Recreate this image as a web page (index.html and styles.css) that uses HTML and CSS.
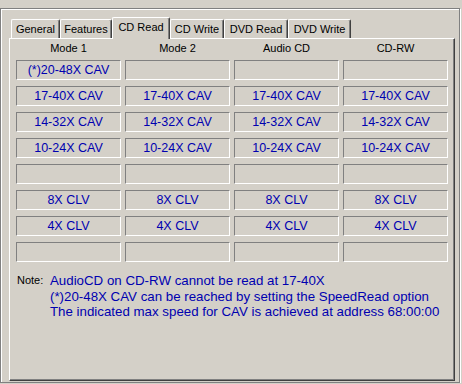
FILE: index.html
```html
<!DOCTYPE html>
<html lang="en">
<head>
    <meta charset="UTF-8">
    <title>CD Read</title>
    <link rel="stylesheet" href="styles.css">
</head>
<body>
    <div class="frame">
        <div class="tabs">
            <div class="tab tab-general">General</div>
            <div class="tab tab-features">Features</div>
            <div class="tab tab-cdread selected">CD Read</div>
            <div class="tab tab-cdwrite">CD Write</div>
            <div class="tab tab-dvdread">DVD Read</div>
            <div class="tab tab-dvdwrite">DVD Write</div>
        </div>
        <div class="panel">
            <div class="heads">
                <div>Mode 1</div>
                <div>Mode 2</div>
                <div>Audio CD</div>
                <div>CD-RW</div>
            </div>
            <div class="cells">
                <!-- row 1 -->
                <div class="cell">(*)20-48X CAV</div>
                <div class="cell"></div>
                <div class="cell"></div>
                <div class="cell"></div>
                <!-- row 2 -->
                <div class="cell">17-40X CAV</div>
                <div class="cell">17-40X CAV</div>
                <div class="cell">17-40X CAV</div>
                <div class="cell">17-40X CAV</div>
                <!-- row 3 -->
                <div class="cell">14-32X CAV</div>
                <div class="cell">14-32X CAV</div>
                <div class="cell">14-32X CAV</div>
                <div class="cell">14-32X CAV</div>
                <!-- row 4 -->
                <div class="cell">10-24X CAV</div>
                <div class="cell">10-24X CAV</div>
                <div class="cell">10-24X CAV</div>
                <div class="cell">10-24X CAV</div>
                <!-- row 5 -->
                <div class="cell"></div>
                <div class="cell"></div>
                <div class="cell"></div>
                <div class="cell"></div>
                <!-- row 6 -->
                <div class="cell">8X CLV</div>
                <div class="cell">8X CLV</div>
                <div class="cell">8X CLV</div>
                <div class="cell">8X CLV</div>
                <!-- row 7 -->
                <div class="cell">4X CLV</div>
                <div class="cell">4X CLV</div>
                <div class="cell">4X CLV</div>
                <div class="cell">4X CLV</div>
                <!-- row 8 -->
                <div class="cell"></div>
                <div class="cell"></div>
                <div class="cell"></div>
                <div class="cell"></div>
            </div>
            <div class="note">
                <span class="note-label">Note:</span>
                <div class="note-text">
                    AudioCD on CD-RW cannot be read at 17-40X<br>
                    (*)20-48X CAV can be reached by setting the SpeedRead option<br>
                    The indicated max speed for CAV is achieved at address 68:00:00
                </div>
            </div>
        </div>
    </div>
</body>
</html>
```

FILE: styles.css
```css
html, body {
    margin: 0;
    background-color: #d4d0c8;
}
body {
    font-family: "Liberation Sans", Arial, sans-serif;
    font-size: 11px;
    color: #000;
    padding-top: 8px;
}
.frame {
    box-sizing: border-box;
    width: 460px;
    height: 375px;
    border: 1px solid #808080;
    box-shadow: inset 1px 1px 0 #fff, 1px 1px 0 #fff;
    padding: 8px 0 1px 0;
}
.tabs {
    display: flex;
    align-items: flex-end;
    height: 21px;
    margin-left: 10px;
}
.tab {
    box-sizing: border-box;
    height: 19px;
    padding: 2px 0 1px 0;
    line-height: 15px;
    text-align: center;
    border-left: 1px solid #fff;
    border-top: 1px solid #fff;
    border-right: 1px solid #404040;
    border-radius: 2px 2px 0 0;
    box-shadow: inset -1px 0 0 #808080;
    white-space: nowrap;
}
.tab.selected {
    height: 22px;
    margin-bottom: -1px;
    position: relative;
    z-index: 1;
    background-color: #d4d0c8;
}
.tab-general { width: 49px; }
.tab-features { width: 52px; }
.tab-cdread { width: 58px; }
.tab-cdwrite { width: 54px; }
.tab-dvdread { width: 64px; }
.tab-dvdwrite { width: 63px; }

.panel {
    box-sizing: border-box;
    width: 446px;
    height: 343px;
    margin-left: 8px;
    border-left: 1px solid #fff;
    border-top: 1px solid #fff;
    border-right: 1px solid #404040;
    border-bottom: 1px solid #404040;
    box-shadow: inset -1px -1px 0 #808080;
    padding-left: 6px;
}
.heads, .cells {
    display: grid;
    grid-template-columns: repeat(4, 105px);
    column-gap: 4px;
}
.heads {
    height: 21px;
    line-height: 19px;
    text-align: center;
}
.cells {
    grid-auto-rows: 20px;
    row-gap: 6px;
}
.cell {
    box-sizing: border-box;
    border-top: 1px solid #808080;
    border-left: 1px solid #808080;
    border-bottom: 1px solid #fff;
    border-right: 1px solid #fff;
    line-height: 18px;
    text-align: center;
    font-size: 12.5px;
    color: #0000b0;
    white-space: nowrap;
}
.note {
    display: flex;
    margin-top: 11px;
    line-height: 15.5px;
}
.note-label {
    width: 33px;
    margin-left: 1px;
}
.note-text {
    font-size: 13.3px;
    color: #0000b0;
    white-space: nowrap;
}
```
